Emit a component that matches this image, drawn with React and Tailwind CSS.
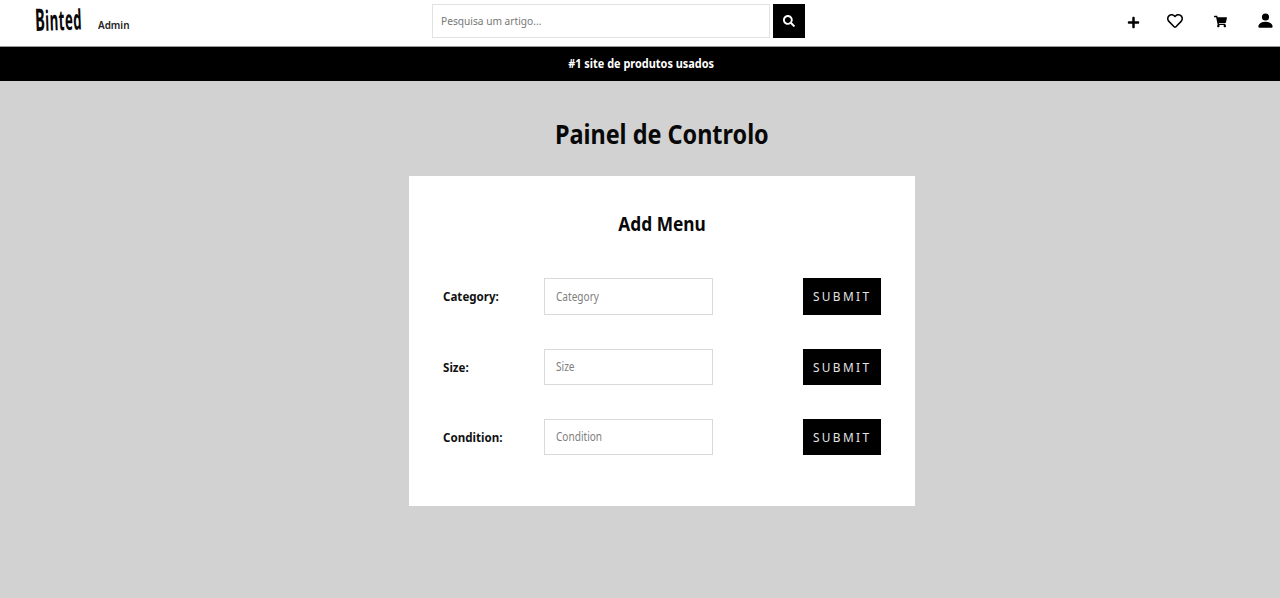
import { FaPlus, FaRegHeart, FaSearch, FaShoppingCart } from "react-icons/fa";
import { BsPersonFill } from "react-icons/bs";

const rows = ["Category", "Size", "Condition"];

function Row({ label }) {
  return (
    <div className="flex h-[36.5px] items-center">
      <label className="w-[101px] shrink-0 pt-px text-[13px] font-bold text-[#111]">
        <span className="inline-block origin-left scale-x-[0.89]">{label}:</span>
      </label>
      <div className="flex h-full w-[169px] items-center border border-[#d9d9d9] pl-[11px] text-[12px] text-[#808080]">
        <span className="inline-block origin-left scale-x-[0.84]">{label}</span>
      </div>
      <button className="ml-auto flex h-full w-[78px] items-center bg-black pt-px pl-[10px] text-[13px] tracking-[2.6px] text-[#e4e4e4]">
        <span className="inline-block origin-left scale-x-[0.91]">SUBMIT</span>
      </button>
    </div>
  );
}

export default function App() {
  return (
    <div className="flex h-[598px] w-[1280px] flex-col overflow-hidden bg-[#d2d2d2] font-['Noto_Sans',sans-serif] whitespace-nowrap">
      <header className="flex h-[47px] shrink-0 items-start border-b border-[#999] bg-white">
        <div className="flex w-[432px] pl-[35px]">
          <div className="w-[63px] text-[28px] leading-[38px] font-bold tracking-[1px] text-[#080808]">
            <span className="inline-block origin-left scale-x-[0.47] -rotate-2">
              <span className="text-[31px]">B</span>inted
            </span>
          </div>
          <span className="origin-left scale-x-90 pt-[16px] text-[11px] leading-[17px] font-semibold text-[#222]">Admin</span>
        </div>
        <div className="mt-[4px] flex h-[34px] w-[338px] items-center border border-[#e2e2e2] pl-[8px] text-[11px] text-[#777]">
          <span className="inline-block origin-left scale-x-[0.925]">Pesquisa um artigo...</span>
        </div>
        <button className="mt-[4px] ml-[3px] flex h-[34px] w-[32px] items-center justify-center bg-black">
          <FaSearch className="mb-[1px] size-[12px] text-white" />
        </button>
        <nav className="ml-auto flex h-[46px] pr-[5px] text-black">
          <FaPlus className="mt-[16px] mr-[27px] size-[13px]" />
          <FaRegHeart className="mt-[13px] mr-[31px] size-[16px]" />
          <FaShoppingCart className="mt-[15px] mr-[29px] size-[13px]" />
          <BsPersonFill className="mt-[11px] size-[19px]" />
        </nav>
      </header>
      <div className="flex h-[33.5px] shrink-0 items-center justify-center bg-black pt-px pl-[2px] text-[12px] font-bold text-white">
        <span className="inline-block scale-x-[0.91]">#1 site de produtos usados</span>
      </div>
      <main className="flex flex-col items-center pl-[44px]">
        <h1 className="mt-[34.5px] h-[61px] text-[26px] leading-[38px] font-bold text-[#080808]">
          <span className="inline-block scale-x-90">Painel de Controlo</span>
        </h1>
        <section className="h-[330px] w-[506px] bg-white px-[34px] pt-[34px]">
          <h2 className="mb-[40.4px] text-center text-[19px] leading-[28px] font-bold text-[#080808]">
            <span className="inline-block scale-x-[0.91]">Add Menu</span>
          </h2>
          <div className="flex flex-col gap-[33.8px]">
            {rows.map((label) => (
              <Row key={label} label={label} />
            ))}
          </div>
        </section>
      </main>
    </div>
  );
}
